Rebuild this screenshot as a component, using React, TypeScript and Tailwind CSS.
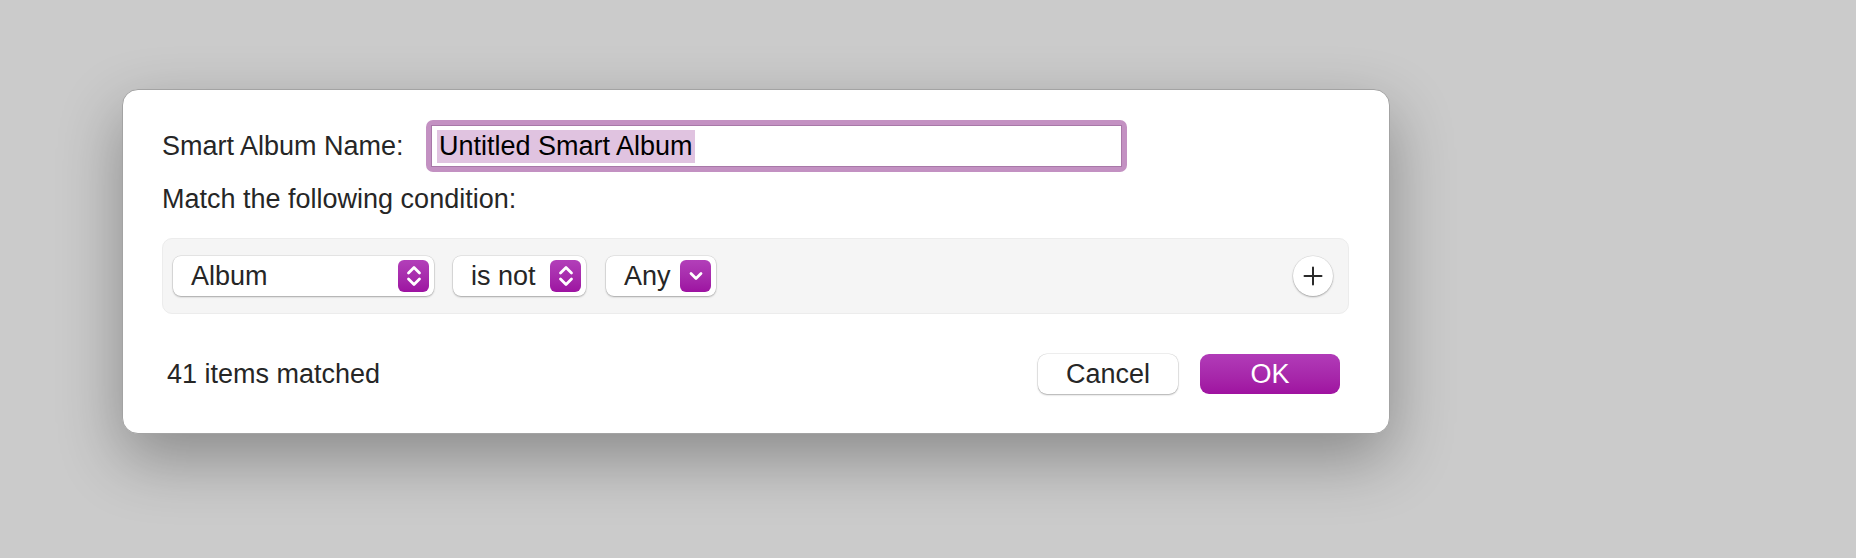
const font = { fontFamily: '"Liberation Sans", Arial, sans-serif' };

function UpDown() {
  return (
    <svg width="18" height="24" viewBox="0 0 18 24" fill="none" stroke="white" strokeWidth="2.8" strokeLinecap="round" strokeLinejoin="round">
      <path d="M3.5 9l5.5-5.5 5.5 5.5" />
      <path d="M3.5 15l5.5 5.5 5.5-5.5" />
    </svg>
  );
}

function Down() {
  return (
    <svg width="18" height="14" viewBox="0 0 18 14" fill="none" stroke="white" strokeWidth="2.8" strokeLinecap="round" strokeLinejoin="round">
      <path d="M4 4.5l5 5 5-5" />
    </svg>
  );
}

function Popup({ label, width, single }: { label: string; width: string; single?: boolean }) {
  return (
    <div
      className={`flex h-[40px] items-center justify-between rounded-[8px] bg-white pl-[18px] pr-[5px] shadow-[0_1px_2px_rgba(0,0,0,0.28),0_0_0_0.5px_rgba(0,0,0,0.12)] ${width}`}
    >
      <span className="text-[27px] leading-none text-[#262626]">{label}</span>
      <div className="flex h-[32px] w-[31px] items-center justify-center rounded-[6px] bg-gradient-to-b from-[#b23fb9] to-[#9d12a1]">
        {single ? <Down /> : <UpDown />}
      </div>
    </div>
  );
}

export default function App() {
  return (
    <div className="h-[558px] w-full overflow-hidden bg-[#cbcbcb] pl-[122px] pt-[89px]" style={font}>
      <div className="flex h-[345px] w-[1268px] flex-col rounded-[16px] border border-[#a3a3a3] bg-white pl-[39px] pr-[40px] pt-[30px] shadow-[0_24px_64px_rgba(0,0,0,0.32)]">
        <div className="flex h-[52px] items-center">
          <div className="w-[264px] text-[27px] text-[#262626]">Smart Album Name:</div>
          <div className="h-[52px] w-[701px] rounded-[7px] bg-[#c391c2] p-[5px]">
            <div className="flex h-full items-center border border-[#a878a8] bg-white pl-[5px]">
              <span className="bg-[#e0c3e0] px-[2px] text-[27px] leading-[33px] text-black">Untitled Smart Album</span>
            </div>
          </div>
        </div>
        <div className="mt-[11px] text-[27px] leading-[32px] text-[#262626]">Match the following condition:</div>
        <div className="mt-[23px] flex h-[76px] items-center rounded-[10px] border border-[#ececec] bg-[#f5f5f5] pl-[10px] pr-[15px]">
          <Popup label="Album" width="w-[261px]" />
          <div className="ml-[19px]">
            <Popup label="is not" width="w-[133px]" />
          </div>
          <div className="ml-[20px]">
            <Popup label="Any" width="w-[110px]" single />
          </div>
          <div className="ml-auto flex h-[40px] w-[40px] items-center justify-center rounded-full bg-white shadow-[0_1px_2px_rgba(0,0,0,0.3),0_0_0_0.5px_rgba(0,0,0,0.1)]">
            <svg width="20" height="20" viewBox="0 0 20 20" stroke="#2a2a2a" strokeWidth="2" strokeLinecap="round">
              <path d="M10 1.5v17M1.5 10h17" />
            </svg>
          </div>
        </div>
        <div className="mt-[40px] flex items-center pl-[5px] pr-[9px]">
          <span className="text-[27px] text-[#262626]">41 items matched</span>
          <div className="ml-auto flex gap-[22px]">
            <div className="flex h-[40px] w-[140px] items-center justify-center rounded-[9px] bg-white text-[27px] text-[#262626] shadow-[0_1px_2px_rgba(0,0,0,0.28),0_0_0_0.5px_rgba(0,0,0,0.12)]">
              Cancel
            </div>
            <div className="flex h-[40px] w-[140px] items-center justify-center rounded-[9px] bg-gradient-to-b from-[#b13bb8] to-[#9f12a0] text-[27px] text-white">
              OK
            </div>
          </div>
        </div>
      </div>
    </div>
  );
}
